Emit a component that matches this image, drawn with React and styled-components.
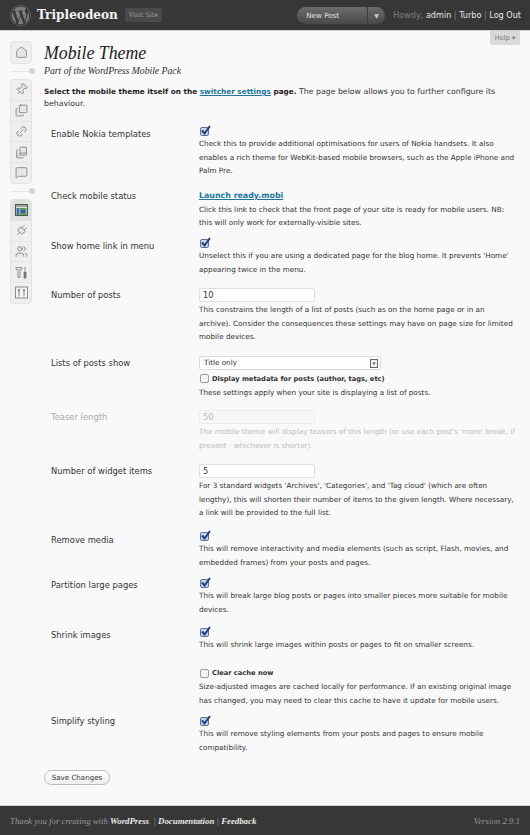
import React from 'react';
import styled, { createGlobalStyle } from 'styled-components';
import { FaWordpress } from 'react-icons/fa';
import { Home, Pin, Images, Link2, BookCopy, MessageSquare, Plug, Users } from 'lucide-react';

const GlobalStyle = createGlobalStyle`
  html, body { margin: 0; padding: 0; background: #f9f9f9; }
  body { font-family: "DejaVu Sans", sans-serif; font-size: 7.25px; color: #333; }
`;

const Page = styled.div`
  width: 530px;
  height: 835px;
  display: flex;
  flex-direction: column;
  overflow: hidden;
`;

const Header = styled.header`
  height: 31px;
  flex: none;
  background: #373737;
  display: flex;
  align-items: center;
  padding: 0 9px 0 10px;
  border-bottom: 1px solid #d0d0d0;
  box-sizing: border-box;
`;

const Logo = styled(FaWordpress)`
  width: 21px;
  height: 21px;
  color: #7d7d7d;
  margin-right: 6px;
`;

const SiteName = styled.div`
  font-family: "DejaVu Serif", serif;
  font-weight: bold;
  font-size: 12.1px;
  color: #f4f4f4;
  margin-right: 7px;
`;

const VisitSite = styled.div`
  background: #4a4a4a;
  color: #a0a0a0;
  font-family: "DejaVu Serif", serif;
  font-size: 6.4px;
  padding: 3px 4px;
  border-radius: 2px;
`;

const FavButton = styled.div`
  margin-left: auto;
  width: 88px;
  height: 17px;
  border-radius: 9px;
  background: linear-gradient(#6c6c6c, #484848);
  display: flex;
  align-items: center;
  color: #e2e2e2;
  font-size: 7.2px;
  margin-right: 8px;
`;

const FavLabel = styled.div`
  flex: 1;
  padding-left: 9px;
`;

const FavArrow = styled.div`
  width: 18px;
  height: 17px;
  border-left: 1px solid #3c3c3c;
  box-sizing: border-box;
  display: flex;
  align-items: center;
  justify-content: center;
  font-size: 6px;
  color: #ccc;
`;

const Howdy = styled.div`
  font-size: 8.1px;
  color: #7f7f7f;
  white-space: nowrap;
  b { color: #e6e6e6; font-weight: normal; }
`;

const Body = styled.div`
  flex: 1;
  display: flex;
  position: relative;
  min-height: 0;
`;

const HelpTab = styled.div`
  position: absolute;
  top: 0;
  right: 10px;
  width: 30px;
  height: 14px;
  background: #d9d9d9;
  color: #777;
  font-size: 6.6px;
  display: flex;
  align-items: center;
  justify-content: center;
  border-radius: 0 0 2px 2px;
`;

const Sidebar = styled.nav`
  width: 44px;
  flex: none;
  padding: 10px 0 0 10px;
  box-sizing: border-box;
`;

const MenuGroup = styled.div`
  width: 20px;
  background: #efefef;
  border: 1px solid #e3e3e3;
  border-radius: 4px;
  overflow: hidden;
`;

const MenuItem = styled.div`
  height: 20.6px;
  box-sizing: border-box;
  display: flex;
  align-items: center;
  justify-content: center;
  color: #777;
  background: ${p => (p.$active ? '#e0e0e0' : 'transparent')};
  & + & { border-top: 1px solid #e4e4e4; }
  svg { fill: #e6e6e6; }
`;

const Tilted = styled.span`
  display: flex;
  transform: rotate(${p => p.$deg}deg);
`;

const Separator = styled.div`
  height: 15px;
  width: 28px;
  display: flex;
  align-items: center;
  justify-content: flex-end;
  background: linear-gradient(#e4e4e4, #e4e4e4) left center / 22px 1px no-repeat;
`;

const SeparatorDot = styled.div`
  width: 6px;
  height: 6px;
  border-radius: 50%;
  background: #d4d4d4;
  margin-right: 3px;
`;

const Main = styled.main`
  flex: 1;
  padding: 11px 0 0 0;
  min-width: 0;
`;

const Title = styled.h2`
  font-family: "Liberation Serif", serif;
  font-style: italic;
  font-weight: normal;
  font-size: 17.8px;
  line-height: 22px;
  color: #222;
  margin: 0;
`;

const Subtitle = styled.div`
  font-family: "Liberation Serif", serif;
  font-style: italic;
  font-size: 9.7px;
  line-height: 13px;
  color: #333;
  margin-bottom: 9px;
`;

const Intro = styled.p`
  margin: 0 0 14px;
  line-height: 12px;
  white-space: nowrap;
  font-size: 7.8px;
  b { color: #222; font-size: 7.3px; }
  a { color: #21759b; text-decoration: underline; font-weight: bold; }
`;

const Row = styled.div`
  display: grid;
  grid-template-columns: 148px 1fr;
  padding-left: 7px;
  margin-top: ${p => p.$gap}px;
`;

const Label = styled.div`
  font-size: 8.4px;
  line-height: 14px;
  padding-top: ${p => p.$top ?? 0}px;
  color: ${p => (p.$off ? '#aaa' : '#333')};
`;

const Field = styled.div`
  min-width: 0;
`;

const Desc = styled.div`
  line-height: 13.5px;
  white-space: nowrap;
  color: ${p => (p.$off ? '#bbb' : '#333')};
`;

const Check = styled.span`
  display: block;
  width: 7px;
  height: 7px;
  margin: 3px 0 1px 1px;
  border: 1px solid ${p => (p.$on ? '#5f7396' : '#9a9a9a')};
  border-radius: 2px;
  background: ${p => (p.$on ? '#c4d4ee' : '#f4f4f4')};
  position: relative;
`;

const CheckMark = styled.svg`
  position: absolute;
  left: -1px;
  top: -3px;
  width: 11px;
  height: 11px;
`;

const InlineCheck = styled.div`
  display: flex;
  align-items: center;
  gap: 3px;
  font-weight: bold;
  font-size: 6.7px;
  line-height: 14px;
  color: #333;
  ${Check} { margin: 0 0 0 1px; flex: none; }
`;

const CheckAfterSelect = styled(InlineCheck)`
  margin-top: 1.5px;
`;

const TextBox = styled.div`
  width: 116px;
  height: 14px;
  box-sizing: border-box;
  border: 1px solid ${p => (p.$off ? '#eee' : '#dfdfdf')};
  border-radius: 2px;
  background: ${p => (p.$off ? '#f7f7f7' : '#fff')};
  color: ${p => (p.$off ? '#bbb' : '#333')};
  font-size: 8.2px;
  line-height: 12px;
  padding-left: 3px;
  margin-bottom: 1px;
`;

const Select = styled.div`
  width: 182px;
  height: 14px;
  box-sizing: border-box;
  border: 1px solid #dcdcdc;
  border-radius: 2px;
  background: #fff;
  font-size: 7.2px;
  line-height: 12px;
  padding-left: 4px;
  display: flex;
  justify-content: space-between;
  align-items: center;
`;

const SelectArrow = styled.span`
  width: 8px;
  height: 9px;
  border: 1px solid #666;
  box-sizing: border-box;
  margin-right: 2px;
  font-size: 5px;
  line-height: 7px;
  text-align: center;
  background: #eee;
`;

const LinkHeading = styled.a`
  display: block;
  color: #21759b;
  font-weight: bold;
  text-decoration: underline;
  font-size: 7.9px;
  line-height: 13.5px;
`;

const SaveButton = styled.div`
  width: 66px;
  height: 15px;
  box-sizing: border-box;
  margin: 16px 0 0 0;
  border: 1px solid #bbb;
  border-radius: 8px;
  background: linear-gradient(#fff, #efefef);
  font-size: 7.1px;
  line-height: 13px;
  text-align: center;
  color: #333;
`;

const Footer = styled.footer`
  height: 30px;
  flex: none;
  background: #373737;
  border-top: 1px solid #d0d0d0;
  box-sizing: border-box;
  display: flex;
  align-items: center;
  justify-content: space-between;
  padding: 0 10px;
  font-family: "Liberation Serif", serif;
  font-style: italic;
  font-size: 8.8px;
  color: #999;
  b { color: #e8e8e8; }
`;

const Tick = () => (
  <Check $on>
    <CheckMark viewBox="0 0 11 11">
      <path d="M2 5.5 L4.6 8.5 L10 1" fill="none" stroke="#1f3f7c" strokeWidth="2" />
    </CheckMark>
  </Check>
);

const AppearanceIcon = () => (
  <svg width="13" height="12" viewBox="0 0 13 12">
    <rect x="0.5" y="0.5" width="12" height="11" fill="#dfe6e0" stroke="#4c5a50" />
    <rect x="1" y="1" width="11" height="2" fill="#9aa79a" />
    <rect x="1.5" y="4" width="3" height="7" fill="#3c6ea0" />
    <rect x="5" y="4" width="6.5" height="7" fill="#5aa05a" />
    <rect x="6" y="6" width="4" height="3" fill="#3c50c0" />
  </svg>
);

const ToolsIcon = () => (
  <svg width="13" height="13" viewBox="0 0 13 13">
    <path d="M1 1.5 h6 v2 h-2 v8 h-2 v-8 h-2 z" fill="#e6e6e6" stroke="#8a8a8a" strokeWidth="0.9" />
    <path d="M10 1 v4 M9 6 h2 v6 h-2 z" fill="#777" stroke="#777" strokeWidth="0.8" />
  </svg>
);

const SettingsIcon = () => (
  <svg width="13" height="13" viewBox="0 0 13 13">
    <rect x="0.5" y="1" width="12" height="11" fill="#f6f6f6" stroke="#8a8a8a" />
    <path d="M3 3 L4 5.5 L5 3 M4 5.5 v5 M8 3 L9 5.5 L10 3 M9 5.5 v5" fill="none" stroke="#777" strokeWidth="0.9" />
  </svg>
);

const icon = { size: 13, strokeWidth: 1.4 };

export default function App() {
  return (
    <Page>
      <GlobalStyle />
      <Header>
        <Logo />
        <SiteName>Tripleodeon</SiteName>
        <VisitSite>Visit Site</VisitSite>
        <FavButton>
          <FavLabel>New Post</FavLabel>
          <FavArrow>▼</FavArrow>
        </FavButton>
        <Howdy>Howdy, <b>admin</b> | <b>Turbo</b> | <b>Log Out</b></Howdy>
      </Header>
      <Body>
        <HelpTab>Help ▾</HelpTab>
        <Sidebar>
          <MenuGroup><MenuItem><Home {...icon} /></MenuItem></MenuGroup>
          <Separator><SeparatorDot /></Separator>
          <MenuGroup>
            <MenuItem><Tilted $deg={40}><Pin {...icon} /></Tilted></MenuItem>
            <MenuItem><Images {...icon} /></MenuItem>
            <MenuItem><Tilted $deg={-45}><Link2 {...icon} /></Tilted></MenuItem>
            <MenuItem><BookCopy {...icon} /></MenuItem>
            <MenuItem><MessageSquare {...icon} /></MenuItem>
          </MenuGroup>
          <Separator><SeparatorDot /></Separator>
          <MenuGroup>
            <MenuItem $active><AppearanceIcon /></MenuItem>
            <MenuItem><Tilted $deg={45}><Plug {...icon} /></Tilted></MenuItem>
            <MenuItem><Users {...icon} /></MenuItem>
            <MenuItem><ToolsIcon /></MenuItem>
            <MenuItem><SettingsIcon /></MenuItem>
          </MenuGroup>
        </Sidebar>
        <Main>
          <Title>Mobile Theme</Title>
          <Subtitle>Part of the WordPress Mobile Pack</Subtitle>
          <Intro>
            <b>Select the mobile theme itself on the <a>switcher settings</a> page.</b> The page below allows you to further configure its<br />
            behaviour.
          </Intro>

          <Row $gap={0}>
            <Label $top={3}>Enable Nokia templates</Label>
            <Field>
              <Tick />
              <Desc>Check this to provide additional optimisations for users of Nokia handsets. It also<br />
                enables a rich theme for WebKit-based mobile browsers, such as the Apple iPhone and<br />
                Palm Pre.</Desc>
            </Field>
          </Row>

          <Row $gap={11.5}>
            <Label>Check mobile status</Label>
            <Field>
              <LinkHeading>Launch ready.mobi</LinkHeading>
              <Desc>Click this link to check that the front page of your site is ready for mobile users. NB:<br />
                this will only work for externally-visible sites.</Desc>
            </Field>
          </Row>

          <Row $gap={6.5}>
            <Label $top={3}>Show home link in menu</Label>
            <Field>
              <Tick />
              <Desc>Unselect this if you are using a dedicated page for the blog home. It prevents 'Home'<br />
                appearing twice in the menu.</Desc>
            </Field>
          </Row>

          <Row $gap={12}>
            <Label>Number of posts</Label>
            <Field>
              <TextBox>10</TextBox>
              <Desc>This constrains the length of a list of posts (such as on the home page or in an<br />
                archive). Consider the consequences these settings may have on page size for limited<br />
                mobile devices.</Desc>
            </Field>
          </Row>

          <Row $gap={12.5}>
            <Label>Lists of posts show</Label>
            <Field>
              <Select>Title only<SelectArrow>▾</SelectArrow></Select>
              <CheckAfterSelect><Check />Display metadata for posts (author, tags, etc)</CheckAfterSelect>
              <Desc>These settings apply when your site is displaying a list of posts.</Desc>
            </Field>
          </Row>

          <Row $gap={11}>
            <Label $off>Teaser length</Label>
            <Field>
              <TextBox $off>50</TextBox>
              <Desc $off>The mobile theme will display teasers of this length (or use each post's 'more' break, if<br />
                present - whichever is shorter).</Desc>
            </Field>
          </Row>

          <Row $gap={12}>
            <Label>Number of widget items</Label>
            <Field>
              <TextBox>5</TextBox>
              <Desc>For 3 standard widgets 'Archives', 'Categories', and 'Tag cloud' (which are often<br />
                lengthy), this will shorten their number of items to the given length. Where necessary,<br />
                a link will be provided to the full list.</Desc>
            </Field>
          </Row>

          <Row $gap={9.5}>
            <Label $top={4}>Remove media</Label>
            <Field>
              <Tick />
              <Desc>This will remove interactivity and media elements (such as script, Flash, movies, and<br />
                embedded frames) from your posts and pages.</Desc>
            </Field>
          </Row>

          <Row $gap={7}>
            <Label $top={2}>Partition large pages</Label>
            <Field>
              <Tick />
              <Desc>This will break large blog posts or pages into smaller pieces more suitable for mobile<br />
                devices.</Desc>
            </Field>
          </Row>

          <Row $gap={9}>
            <Label $top={3}>Shrink images</Label>
            <Field>
              <Tick />
              <Desc>This will shrink large images within posts or pages to fit on smaller screens.</Desc>
            </Field>
          </Row>

          <Row $gap={14.5}>
            <Label />
            <Field>
              <InlineCheck><Check />Clear cache now</InlineCheck>
              <Desc>Size-adjusted images are cached locally for performance. If an existing original image<br />
                has changed, you may need to clear this cache to have it update for mobile users.</Desc>
            </Field>
          </Row>

          <Row $gap={7}>
            <Label>Simplify styling</Label>
            <Field>
              <Tick />
              <Desc>This will remove styling elements from your posts and pages to ensure mobile<br />
                compatibility.</Desc>
            </Field>
          </Row>

          <SaveButton>Save Changes</SaveButton>
        </Main>
      </Body>
      <Footer>
        <span>Thank you for creating with <b>WordPress</b>. | <b>Documentation</b> | <b>Feedback</b></span>
        <span>Version 2.9.1</span>
      </Footer>
    </Page>
  );
}
